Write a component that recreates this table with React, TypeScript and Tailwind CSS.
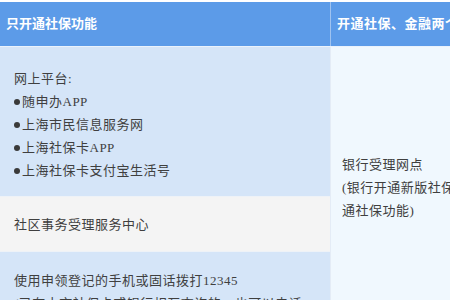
const FONT = '"Liberation Serif", "Noto Sans CJK SC", serif';

const platforms = ['随申办APP', '上海市民信息服务网', '上海社保卡APP', '上海社保卡支付宝生活号'];

function Bullet({ children }: { children: string }) {
  return (
    <div className="flex items-center">
      <span className="mr-[2px] inline-block h-[6px] w-[6px] rounded-full bg-[#3a3a3a]" />
      {children}
    </div>
  );
}

export default function App() {
  return (
    <div className="h-[300px] w-[450px] overflow-hidden bg-white" style={{ fontFamily: FONT }}>
      <div className="w-[580px] pt-[2px]">
        {/* Header */}
        <div className="flex h-[44px] bg-[#5c9be8] text-[13px] font-bold text-white">
          <div className="flex w-[331px] items-center border-r border-[#9fc3f0] px-[6px]">只开通社保功能</div>
          <div className="flex flex-1 items-center px-[6px] tracking-[0.5px]">开通社保、金融两个功能</div>
        </div>

        {/* Body */}
        <div className="flex border-t border-[#eaf2fc] text-[13px] leading-[23px] tracking-[0.5px] text-[#3f3f3f]">
          <div className="flex w-[331px] flex-col border-r border-[#e4ecf6]">
            <div className="h-[149px] bg-[#d5e5f8] px-[14px] pt-[20px]">
              <div>网上平台:</div>
              {platforms.map((p) => (
                <Bullet key={p}>{p}</Bullet>
              ))}
            </div>
            <div className="flex h-[55px] items-center border-t border-[#eef2f7] bg-[#f4f4f4] px-[14px]">
              社区事务受理服务中心
            </div>
            <div className="border-t border-[#eef2f7] bg-[#d5e5f8] px-[14px] pt-[17px] pb-[17px]">
              <div>使用申领登记的手机或固话拨打12345</div>
              <div>(已有本市社保卡或银行相互查询的，也可以电话</div>
            </div>
          </div>
          <div className="flex flex-1 items-center bg-[#f0f8fe] px-[11px] pb-[4px]">
            <div>
              <div>银行受理网点</div>
              <div>(银行开通新版社保卡的，同时开</div>
              <div>通社保功能)</div>
            </div>
          </div>
        </div>
      </div>
    </div>
  );
}
